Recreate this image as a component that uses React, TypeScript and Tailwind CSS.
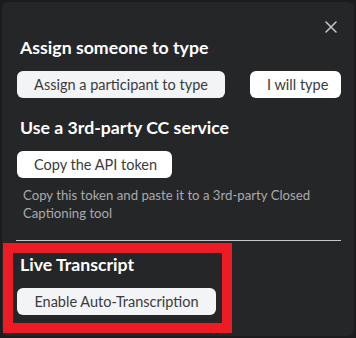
import React from "react";

const font = { fontFamily: 'Lato, "Noto Sans", sans-serif' };

function CloseIcon() {
  return (
    <svg width="12" height="12" viewBox="0 0 12 12" className="block">
      <path d="M1 1L11 11M11 1L1 11" stroke="#c8c8ca" strokeWidth="1.5" strokeLinecap="round" />
    </svg>
  );
}

function PillButton({ label, light, className }: { label: string; light?: boolean; className?: string }) {
  return (
    <button
      type="button"
      className={
        "h-[27px] whitespace-nowrap rounded-[6px] px-[17px] text-[14.5px] leading-[27px] text-[#3a3b3d] " +
        (light ? "bg-[#f3f4f6] " : "bg-white ") +
        (className ?? "")
      }
    >
      {label}
    </button>
  );
}

function Heading({ children, className }: { children: React.ReactNode; className?: string }) {
  return (
    <h2 className={"pl-[3px] text-[17.7px] font-bold leading-[22px] text-white " + (className ?? "")}>
      {children}
    </h2>
  );
}

export default function App() {
  return (
    <div className="relative h-[338px] w-[356px] bg-[#1c1c1e] p-[2px]" style={font}>
      <div className="h-[334px] rounded-[6px] bg-[#252628] pl-[15px] pr-[13px]">
        <div className="flex justify-end pt-[19px] pr-[4px]">
          <CloseIcon />
        </div>

        <Heading className="mt-[4px]">Assign someone to type</Heading>
        <div className="mt-[12px] flex gap-[25px]">
          <PillButton label="Assign a participant to type" light className="w-[208px]" />
          <PillButton label="I will type" className="w-[91px] px-0" />
        </div>

        <Heading className="mt-[19px]">Use a 3rd-party CC service</Heading>
        <div className="mt-[12px] flex">
          <PillButton label="Copy the API token" className="w-[155px] px-0" />
        </div>
        <p className="mt-[9px] pl-[6px] text-[13.2px] leading-[17.5px] text-[#a9aaac]">
          Copy this token and paste it to a 3rd-party Closed Captioning tool
        </p>

        <div className="ml-[-1px] mt-[18px] h-px bg-[#c6c6c8]" />

        <Heading className="mt-[13px]">Live Transcript</Heading>
        <div className="mt-[12px] flex">
          <PillButton label="Enable Auto-Transcription" light className="w-[199px] px-0" />
        </div>
      </div>

      {/* annotation highlight */}
      <div className="pointer-events-none absolute left-[3px] top-[243px] h-[90px] w-[229px] border-[10px] border-[#ed1c24]" />
    </div>
  );
}
